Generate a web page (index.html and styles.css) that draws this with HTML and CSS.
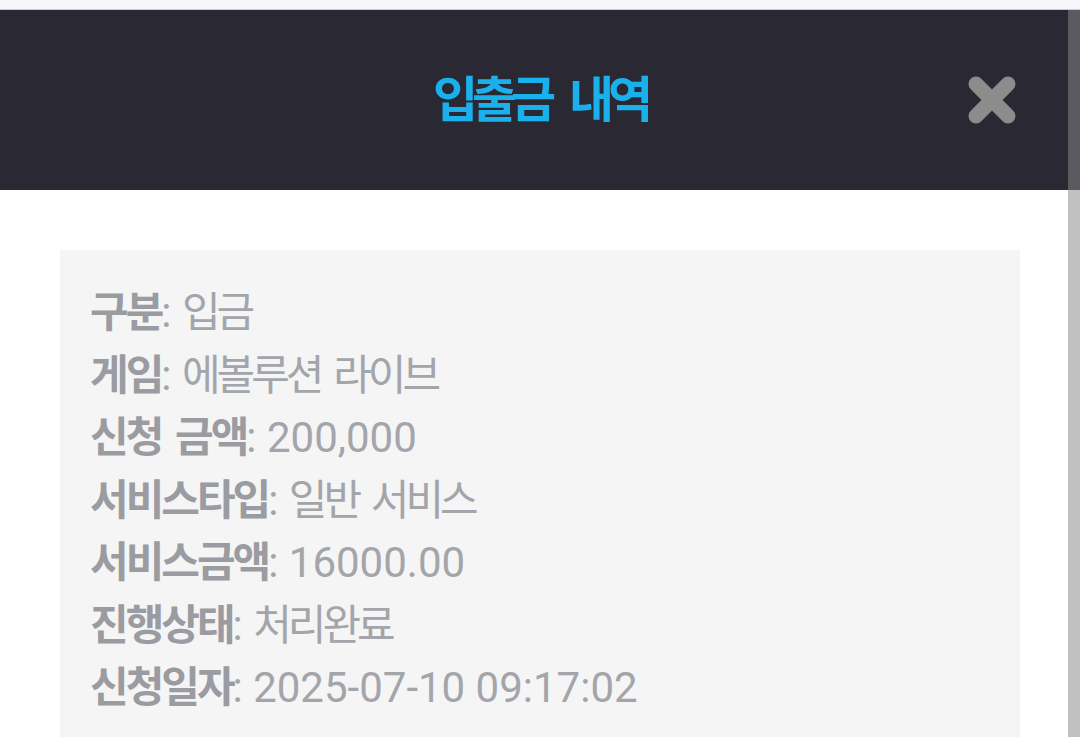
FILE: index.html
```html
<!DOCTYPE html>
<html lang="ko">
<head>
<meta charset="utf-8">
<title>입출금 내역</title>
<link rel="stylesheet" href="styles.css">
</head>
<body>
<div class="topstrip"></div>
<div class="page">
  <header class="header">
    <h1 class="title">입출금 내역</h1>
    <button class="close" aria-label="닫기">
      <svg width="48" height="48" viewBox="0 0 48 48"><path d="M8 8 L40 40 M40 8 L8 40" stroke="#8c8c8c" stroke-width="15" stroke-linecap="round" fill="none"/></svg>
    </button>
  </header>
  <main class="content">
    <div class="card">
      <p class="row"><b class="k">구분</b>: <span class="k">입금</span></p>
      <p class="row"><b class="k">게임</b>: <span class="k">에볼루션 라이브</span></p>
      <p class="row"><b class="k">신청 금액</b>: 200,000</p>
      <p class="row"><b class="k">서비스타입</b>: <span class="k">일반 서비스</span></p>
      <p class="row"><b class="k">서비스금액</b>: 16000.00</p>
      <p class="row"><b class="k">진행상태</b>: <span class="k">처리완료</span></p>
      <p class="row"><b class="k">신청일자</b>: 2025-07-10 09:17:02</p>
    </div>
  </main>
  <div class="scrollbar"></div>
</div>
</body>
</html>
```
FILE: styles.css
```css
html, body {
  margin: 0;
  padding: 0;
  background: #ffffff;
  height: 100%;
  overflow: hidden;
}
body {
  font-family: Roboto, "Noto Sans CJK KR", sans-serif;
}
.topstrip {
  height: 9px;
  background: #f7f7fb;
  border-bottom: 1px solid #c9c9cf;
}
.page {
  position: relative;
  height: 727px;
}
.header {
  height: 180px;
  background: #2a2933;
  display: flex;
  align-items: center;
  justify-content: center;
  position: relative;
}
.title {
  margin: -10px 0 0 0;
  font-family: "Noto Sans CJK KR", sans-serif;
  font-size: 49px;
  font-weight: 700;
  letter-spacing: -6px;
  word-spacing: 11px;
  color: #1ab0ec;
  line-height: 1;
}
.close {
  position: absolute;
  left: 968px;
  top: 66px;
  width: 48px;
  height: 48px;
  padding: 0;
  border: 0;
  background: none;
  display: block;
}
.close svg { display: block; }
.content {
  padding: 60px 60px 0;
}
.card {
  background: #f5f5f5;
  padding: 32px 30px 40px;
}
.row {
  margin: 0;
  height: 62.5px;
  font-size: 42px;
  line-height: 62.5px;
  color: #a3a5aa;
  white-space: nowrap;
}
.row b {
  font-weight: 700;
  color: #9a9ca1;
}
.k {
  font-family: "Noto Sans CJK KR", sans-serif;
  letter-spacing: -4px;
  word-spacing: 5px;
  line-height: 1;
}
.row b.k {
  letter-spacing: -3px;
}
.scrollbar {
  position: absolute;
  top: 0;
  right: 0;
  bottom: 0;
  width: 12px;
  background: rgba(136, 136, 136, 0.52);
}
```
